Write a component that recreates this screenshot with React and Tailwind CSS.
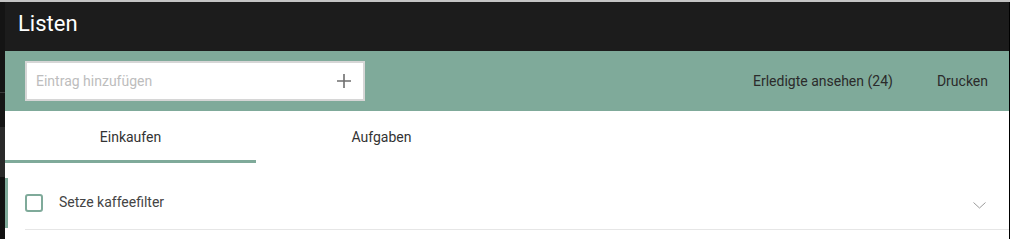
export default function App() {
  return (
    <div
      className="w-[1010px] h-[239px] flex flex-col overflow-hidden bg-white"
      style={{ fontFamily: "Roboto, 'Noto Sans', sans-serif" }}
    >
      <div className="h-[2px] bg-[#c4c4c4] shrink-0" />
      <div className="flex flex-1 min-h-0">
        {/* left background strip */}
        <div className="w-[5px] shrink-0 flex flex-col bg-[#121212]">
          <div className="h-[90px] bg-[#141414]" />
          <div className="h-[1px] bg-[#3a3a3a]" />
          <div className="h-[34px] bg-[#151515]" />
          <div className="h-[50px] bg-[#2a2a2a]" />
          <div className="flex-1 bg-[#111111]" />
        </div>

        {/* main */}
        <div className="flex-1 flex flex-col min-w-0">
          <div className="h-[49px] shrink-0 bg-[#1c1c1c] pl-[13px] pt-[11px]">
            <span className="text-white text-[22px] leading-[22px] block">Listen</span>
          </div>

          <div className="h-[60px] shrink-0 bg-[#7faa9a] flex items-center pl-[20px] pr-[21px]">
            <div className="w-[340px] h-[40px] bg-white border-2 border-[#d6d6d6] flex items-center pl-[9px] pr-[11px]">
              <span className="flex-1 text-[14px] text-[#bdbdbd]">Eintrag hinzufügen</span>
              <svg width="16" height="16" viewBox="0 0 16 16" className="shrink-0">
                <path d="M8 1v14M1 8h14" stroke="#6f6f6f" strokeWidth="1.6" fill="none" />
              </svg>
            </div>
            <div className="flex-1" />
            <span className="text-[14px] text-[#2b2b2b]">Erledigte ansehen (24)</span>
            <span className="text-[14px] text-[#2b2b2b] ml-[44px]">Drucken</span>
          </div>

          <div className="h-[52px] shrink-0 flex">
            <div className="w-[251px] flex flex-col">
              <div className="flex-1 flex items-center justify-center text-[14px] text-[#333] pt-[3px]">Einkaufen</div>
              <div className="h-[3px] bg-[#7faa9a]" />
            </div>
            <div className="w-[251px] flex flex-col">
              <div className="flex-1 flex items-center justify-center text-[14px] text-[#333] pt-[3px]">Aufgaben</div>
              <div className="h-[3px]" />
            </div>
          </div>

          <div className="pt-[15px] flex">
            <div className="w-[3px] h-[50px] bg-[#7faa9a] shrink-0" />
            <div className="flex-1 ml-[17px] h-[52px] border-b border-[#e6e6e6] flex items-center pb-[2px]">
              <div className="w-[18px] h-[18px] border-2 border-[#7faa9a] rounded-[3px] shrink-0" />
              <span className="ml-[16px] text-[14px] text-[#444]">Setze kaffeefilter</span>
              <div className="flex-1" />
              <svg width="13" height="7" viewBox="0 0 13 7" className="mr-[23px] mt-[6px]">
                <path d="M0.5 0.5L6.5 6L12.5 0.5" stroke="#9a9a9a" strokeWidth="1" fill="none" />
              </svg>
            </div>
          </div>
        </div>

        <div className="w-[1px] shrink-0 bg-black" />
      </div>
    </div>
  );
}
